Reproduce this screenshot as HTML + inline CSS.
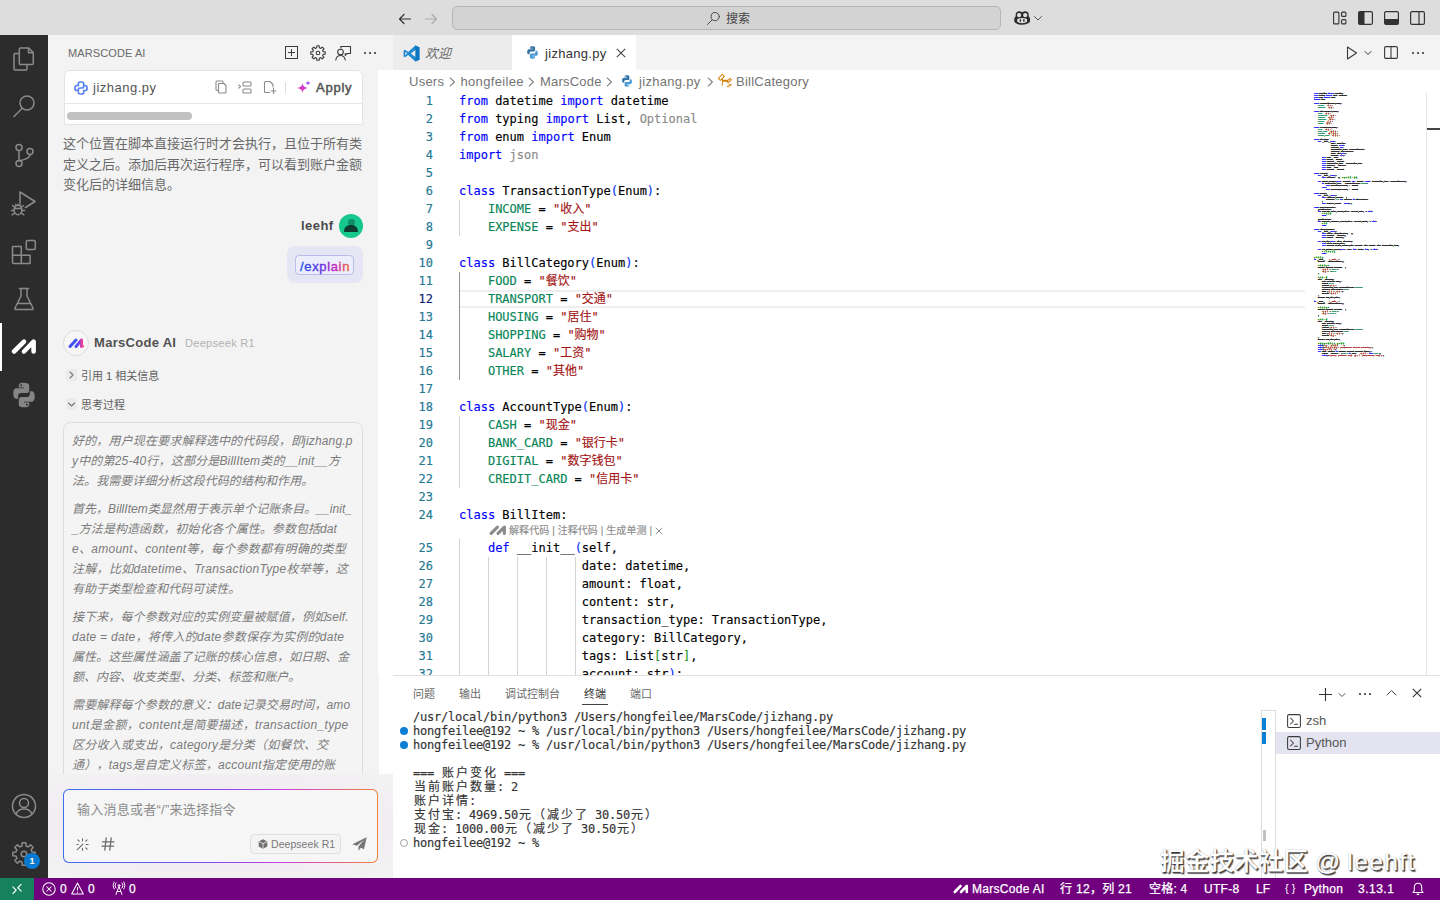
<!DOCTYPE html>
<html lang="zh-CN">
<head>
<meta charset="utf-8">
<title>jizhang.py — MarsCode</title>
<style>
*{box-sizing:border-box;margin:0;padding:0}
html,body{width:1440px;height:900px;overflow:hidden;background:#fff}
body{position:relative;font-family:"Liberation Sans","Noto Sans CJK SC",sans-serif;font-size:13px;color:#333;-webkit-font-smoothing:antialiased}
.abs{position:absolute}
svg{display:block;overflow:visible}
/* title bar */
#title{position:absolute;left:0;top:0;width:1440px;height:35px;background:#dddddd}
#search{position:absolute;left:452px;top:6px;width:549px;height:24px;border:1px solid #b6b6b6;border-radius:5px;background:#d3d3d3}
#search span{position:absolute;left:273px;top:4px;font-size:12px;color:#444;line-height:16px}
/* activity bar */
#act{position:absolute;left:0;top:35px;width:48px;height:843px;background:#2c2c2c}
#act svg{position:absolute}
/* sidebar */
#side{position:absolute;left:48px;top:35px;width:345px;height:843px;background:#f3f3f3;overflow:hidden}
#sidehead{position:absolute;left:20px;top:12px;font-size:11px;color:#6a6a6a;line-height:13px;letter-spacing:.1px}
#tt{text-spacing-trim:space-all}#tt p{height:20px}#tt p.gap{margin-top:8px}
/* editor */
#tabs{position:absolute;left:393px;top:35px;width:1047px;height:35px;background:#f3f3f3}
.tab{position:absolute;top:0;height:35px;font-size:13px;line-height:35px}
#crumbs{position:absolute;left:378px;top:70px;width:1062px;height:22px;background:#fff;font-size:13px;color:#747474;line-height:22px}
#crumbs span{position:absolute;top:1px;white-space:nowrap}
#editor{position:absolute;left:378px;top:92px;width:1062px;height:583px;background:#fff;overflow:hidden}
.ln{position:absolute;left:0;width:55px;text-align:right;font:12px/18px "DejaVu Sans Mono","Liberation Mono",monospace;color:#237893;height:18px}
.cl{position:absolute;left:81px;font:12px/18px "DejaVu Sans Mono","Noto Sans CJK SC","Liberation Mono",monospace;color:#000;height:18px;white-space:pre}
.cl,.ln,.tl{-webkit-text-stroke:.15px currentColor}
.k{color:#0000ff}.s{color:#a31515}.c{color:#098658}.b1{color:#0431fa}.b2{color:#319331}.u{color:#8a8a8a}
.g{position:absolute;width:1px;background:#d3d3d3}
.ga{background:#939393}
.ln.cur{color:#0b216f}
#minimap{left:1314px;top:92px;margin:0;font:bold 12px/10px "DejaVu Sans Mono","Noto Sans CJK SC",monospace;color:#000;transform:scale(.13843,.2);opacity:.85;text-shadow:.6px 0 currentColor,-.6px 0 currentColor,0 .7px currentColor,0 -.7px currentColor;transform-origin:0 0}
#minimap div{height:10px;white-space:pre}
#minimap i{font-style:normal;font-size:7px;letter-spacing:7.448px}
#minimap .c2{color:#008000}
/* panel */
#panel{position:absolute;left:393px;top:675px;width:1047px;height:203px;background:#fff;border-top:1px solid #e0e0e0;overflow:hidden}
.pt{position:absolute;top:11px;font-size:11px;line-height:14px;color:#6a6a6a;white-space:nowrap}
.tl{position:absolute;left:20px;letter-spacing:-.224px;font:12px/14px "DejaVu Sans Mono","Noto Sans CJK SC","Liberation Mono",monospace;color:#333;height:14px;white-space:pre}
.tl i{font-style:normal;display:inline-block;width:14px;text-align:center;letter-spacing:0}
/* status */
#status{position:absolute;left:0;top:878px;width:1440px;height:22px;background:#70007e;color:#fff;font-size:12px;line-height:22px}
#status span{position:absolute;top:0;white-space:nowrap;-webkit-text-stroke:.25px #fff}
</style>
</head>
<body>
<div id="title">
  <svg class="abs" style="left:397px;top:10.500px" width="16" height="16" viewBox="0 0 16 16" fill="none" stroke="#333" stroke-width="1.2" stroke-linecap="round" stroke-linejoin="round"><path d="M13.5 8H2.5M7 3.5L2.5 8L7 12.5"/></svg>
  <svg class="abs" style="left:423px;top:10.500px" width="16" height="16" viewBox="0 0 16 16" fill="none" stroke="#a9a9a9" stroke-width="1.2" stroke-linecap="round" stroke-linejoin="round"><path d="M2.5 8H13.5M9 3.5L13.5 8L9 12.5"/></svg>
  <div id="search">
    <svg class="abs" style="left:253.400px;top:4px" width="15" height="15" viewBox="0 0 15 15" fill="none" stroke="#444" stroke-width=".95" stroke-linecap="round"><circle cx="9.200" cy="5.600" r="4.100"/><path d="M6.2 8.8L1.5 13.5"/></svg>
    <span>搜索</span>
  </div>
  <svg class="abs" style="left:1013.700px;top:10.500px" width="16.300" height="14.500" viewBox="0 0 17 15" preserveAspectRatio="none"><g fill="#2b2b2b"><circle cx="5.400" cy="4.100" r="3.800"/><circle cx="11.600" cy="4.100" r="3.800"/><rect x="5.400" y="1.400" width="6.200" height="6"/><path d="M2 5.500C.8 6.300.3 7.300.3 8.600v1.800c0 .7.300 1.200.8 1.600C3.200 13.500 5.700 14.300 8.500 14.300s5.300-.8 7.400-2.300c.5-.4.800-.9.800-1.600V8.600c0-1.300-.5-2.300-1.700-3.100z"/></g><g fill="#dddddd"><circle cx="5.300" cy="4.200" r="2.250"/><circle cx="11.700" cy="4.200" r="2.250"/><path d="M3.400 8.300c1.500-.7 3.200-1 5.100-1s3.600.3 5.100 1v2.900c-1.500 1-3.200 1.500-5.100 1.500s-3.600-.5-5.100-1.500z"/></g><g fill="#2b2b2b"><rect x="6" y="8.300" width="1.400" height="2.900" rx=".7"/><rect x="9.600" y="8.300" width="1.400" height="2.900" rx=".7"/></g></svg>
  <svg class="abs" style="left:1033px;top:14px" width="10" height="8" viewBox="0 0 10 8" fill="none" stroke="#555" stroke-width="1" stroke-linecap="round" stroke-linejoin="round"><path d="M1.500 2.500L5 6L8.500 2.500"/></svg>
  <!-- layout controls -->
  <svg class="abs" style="left:1333px;top:11px" width="14" height="14" viewBox="0 0 14 14" fill="none" stroke="#333" stroke-width="1.100"><rect x=".6" y="1.100" width="5.300" height="11.800" rx="1"/><rect x="8.600" y="1.100" width="4.300" height="4.300" rx="1"/><rect x="8.600" y="8.600" width="4.300" height="4.300" rx="1"/></svg>
  <svg class="abs" style="left:1358px;top:11px" width="15" height="14" viewBox="0 0 15 14"><rect x=".6" y=".6" width="13.800" height="12.800" rx="1.500" fill="none" stroke="#333" stroke-width="1.200"/><path d="M.6 2.100A1.500 1.500 0 0 1 2.100.6H6.500V13.400H2.100A1.500 1.500 0 0 1 .6 11.900z" fill="#333"/></svg>
  <svg class="abs" style="left:1384px;top:11px" width="15" height="14" viewBox="0 0 15 14"><rect x=".6" y=".6" width="13.800" height="12.800" rx="1.500" fill="none" stroke="#333" stroke-width="1.200"/><path d="M.6 8H14.400V11.900A1.500 1.500 0 0 1 12.900 13.400H2.100A1.500 1.500 0 0 1 .6 11.900z" fill="#333"/></svg>
  <svg class="abs" style="left:1410px;top:11px" width="15" height="14" viewBox="0 0 15 14" fill="none" stroke="#333" stroke-width="1.200"><rect x=".6" y=".6" width="13.800" height="12.800" rx="1.500"/><path d="M9 .6V13.400"/></svg>
</div>

<div id="act">
  <!-- explorer -->
  <svg style="left:12px;top:11px" width="24" height="26" viewBox="0 0 24 26" fill="none" stroke="#8a8a8a" stroke-width="1.500" stroke-linejoin="round"><path d="M8.500 2h8.200l4.600 4.600V17.300a1.200 1.200 0 0 1-1.200 1.200H8.500a1.200 1.200 0 0 1-1.200-1.200V3.200A1.200 1.200 0 0 1 8.500 2z"/><path d="M16.500 2v4.800h4.800"/><path d="M7.300 7.500H3.200A1.200 1.200 0 0 0 2 8.700V22.800A1.200 1.200 0 0 0 3.200 24H13.800A1.200 1.200 0 0 0 15 22.800V18.500"/></svg>
  <!-- search -->
  <svg style="left:12px;top:59px" width="24" height="24" viewBox="0 0 24 24" fill="none" stroke="#8a8a8a" stroke-width="1.500" stroke-linecap="round"><circle cx="15" cy="9" r="7"/><path d="M10 14.500L2 22.500"/></svg>
  <!-- scm -->
  <svg style="left:12px;top:107px" width="24" height="26" viewBox="0 0 24 26" fill="none" stroke="#8a8a8a" stroke-width="1.500"><circle cx="7" cy="5.500" r="3"/><circle cx="7" cy="21.500" r="3"/><circle cx="18" cy="9.500" r="3"/><path d="M7 8.500V18.500M18 12.500c0 4-4 4.500-7.500 5.500C8 18.500 7 19 7 19.500"/></svg>
  <!-- debug -->
  <svg style="left:10px;top:154px" width="28" height="28" viewBox="0 0 28 28" fill="none" stroke="#8a8a8a" stroke-width="1.500" stroke-linejoin="round" stroke-linecap="round"><path d="M10 14V3l15 9.500-9.500 6"/><ellipse cx="8" cy="21" rx="3.800" ry="4.800"/><path d="M4.200 19.500H11.800M8 16.200V15.200M5.500 15.500l1 1M10.500 15.500l-1 1M4.200 21.500H1.500M4.500 24l-2.300 1.800M11.800 21.500h2.700M11.500 24l2.300 1.800M4.800 18.200L2.500 16.500M11.200 18.200l2.300-1.700"/></svg>
  <!-- extensions -->
  <svg style="left:11px;top:204px" width="26" height="26" viewBox="0 0 26 26" fill="none" stroke="#8a8a8a" stroke-width="1.500" stroke-linejoin="round"><path d="M1.500 7.500h8.800v8.800h8.800v8.200H2.700a1.200 1.200 0 0 1-1.200-1.200z"/><path d="M1.500 16.300h8.800v8.200"/><rect x="15.300" y="1.500" width="9" height="9" rx="1.200"/></svg>
  <!-- flask -->
  <svg style="left:12px;top:252px" width="24" height="24" viewBox="0 0 24 24" fill="none" stroke="#8a8a8a" stroke-width="1.500" stroke-linejoin="round" stroke-linecap="round"><path d="M7.500 1.500h9M9 1.500V9L3 21a1 1 0 0 0 .9 1.500h16.200A1 1 0 0 0 21 21L15 9V1.500M6 16.500h12"/></svg>
  <!-- active indicator -->
  <div class="abs" style="left:0;top:288px;width:2px;height:48px;background:#fff"></div>
  <!-- marscode -->
  <svg style="left:11px;top:303px" width="26" height="18" viewBox="0 0 26 18" fill="none" stroke="#fff" stroke-width="4.600" stroke-linecap="round" stroke-linejoin="round"><path d="M3 13.500L13 3.700"/><path d="M13 13.500L22.600 3.700V13.500"/></svg>
  <!-- python -->
  <svg style="left:11px;top:347px" width="26" height="26" viewBox="1 0 22 24"><path d="M11.900.6c-5 0-4.700 2.200-4.700 2.200v2.300h4.800v.7H5.300S2.100 5.400 2.100 10.500s2.800 4.900 2.800 4.900h1.700V13s-.1-2.800 2.800-2.800h4.700s2.700 0 2.700-2.600V3.300S17.200.6 11.900.6zM9.300 2.100a.9.900 0 1 1 0 1.800.9.900 0 0 1 0-1.800z" fill="#858585"/><path d="M12.100 23.400c5 0 4.700-2.200 4.700-2.200v-2.300H12v-.7h6.700s3.200.4 3.200-4.700-2.800-4.900-2.800-4.900h-1.700V11s.1 2.800-2.800 2.800H9.900s-2.700 0-2.700 2.600v4.300s-.4 2.700 4.900 2.700zm2.600-1.500a.9.900 0 1 1 0-1.800.9.900 0 0 1 0 1.800z" fill="#858585"/></svg>
  <!-- account -->
  <svg style="left:11px;top:758px" width="26" height="26" viewBox="0 0 26 26" fill="none" stroke="#8a8a8a" stroke-width="1.500"><circle cx="13" cy="13" r="11.500"/><circle cx="13" cy="10" r="4.500"/><path d="M5 21.200c1.200-3.500 4.200-5.200 8-5.200s6.800 1.700 8 5.200"/></svg>
  <!-- gear -->
  <svg style="left:12px;top:807px" width="24" height="24" viewBox="0 0 24 24" fill="none" stroke="#8a8a8a" stroke-width="1.500" stroke-linejoin="round"><path d="M10.00 3.94L10.14 0.85L13.86 0.85L14.00 3.94L16.28 4.89L18.57 2.81L21.19 5.43L19.11 7.72L20.06 10.00L23.15 10.14L23.15 13.86L20.06 14.00L19.11 16.28L21.19 18.57L18.57 21.19L16.28 19.11L14.00 20.06L13.86 23.15L10.14 23.15L10.00 20.06L7.72 19.11L5.43 21.19L2.81 18.57L4.89 16.28L3.94 14.00L0.85 13.86L0.85 10.14L3.94 10.00L4.89 7.72L2.81 5.43L5.43 2.81L7.72 4.89z"/><circle cx="12" cy="12" r="2.800"/></svg>
  <div class="abs" style="left:24px;top:818px;width:16px;height:16px;border-radius:8px;background:#0a7ad0;color:#fff;font-size:9px;font-weight:bold;line-height:16px;text-align:center">1</div>
</div>
<div id="side">
  <div id="sidehead">MARSCODE AI</div>
  <!-- header actions -->
  <svg class="abs" style="left:285px;top:46px;margin-left:-48px;margin-top:-35px" width="13" height="13" viewBox="0 0 13 13" fill="none" stroke="#3b3b3b" stroke-width="1"><rect x=".5" y=".5" width="12" height="12"/><path d="M6.500 3V10M3 6.500H10"/></svg>
  <svg class="abs" style="left:262px;top:10px" width="16" height="16" viewBox="0 0 16 16" fill="none" stroke="#3b3b3b" stroke-width="1.100" stroke-linejoin="round"><path d="M6.70 2.76L6.80 0.80L9.20 0.80L9.30 2.76L10.79 3.37L12.24 2.06L13.94 3.76L12.63 5.21L13.24 6.70L15.20 6.80L15.20 9.20L13.24 9.30L12.63 10.79L13.94 12.24L12.24 13.94L10.79 12.63L9.30 13.24L9.20 15.20L6.80 15.20L6.70 13.24L5.21 12.63L3.76 13.94L2.06 12.24L3.37 10.79L2.76 9.30L0.80 9.20L0.80 6.80L2.76 6.70L3.37 5.21L2.06 3.76L3.76 2.06L5.21 3.37z"/><circle cx="8" cy="8" r="1.800"/></svg>
  <svg class="abs" style="left:287px;top:10px" width="17" height="16" viewBox="0 0 17 16" fill="none" stroke="#3b3b3b" stroke-width="1.100" stroke-linejoin="round" stroke-linecap="round"><circle cx="5.500" cy="7" r="2.800"/><path d="M.8 15c.5-3 2.300-4.500 4.700-4.500s4.200 1.500 4.700 4.500"/><path d="M6 1.500h9.500v7H12l-1.800 1.800V8.500"/><path d="M6 1.500V3"/></svg>
  <svg class="abs" style="left:315px;top:16px" width="14" height="4" viewBox="0 0 14 4" fill="#3b3b3b"><circle cx="2" cy="2" r="1.100"/><circle cx="7" cy="2" r="1.100"/><circle cx="12" cy="2" r="1.100"/></svg>

  <!-- code card -->
  <div class="abs" style="left:15.5px;top:35px;width:299px;height:55px;background:#fff;border:1px solid #e4e4e4;border-radius:6px 6px 0 0"></div>
  <div class="abs" style="left:16px;top:68px;width:298px;height:1px;background:#e6e6e6"></div>
  <svg class="abs" style="left:26px;top:46px" width="14" height="14" viewBox="0 0 14 14" fill="none" stroke="#5882f2" stroke-width="1.700" stroke-linecap="round"><path d="M4.300 4.500V2.800a1.800 1.800 0 0 1 1.800-1.800h1.800a1.800 1.800 0 0 1 1.800 1.800v2.400a1.800 1.800 0 0 1-1.800 1.800H6.100a1.800 1.800 0 0 0-1.800 1.800v.7"/><path d="M9.700 9.500v1.700a1.800 1.800 0 0 1-1.800 1.800H6.100a1.800 1.800 0 0 1-1.800-1.800"/><path d="M4.300 4.500H2.800A1.800 1.800 0 0 0 1 6.300v1.400a1.800 1.800 0 0 0 1.800 1.800h1.500M9.700 4.500h1.500A1.800 1.800 0 0 1 13 6.300v1.400a1.800 1.800 0 0 1-1.800 1.800H9.700"/></svg>
  <div class="abs" style="left:45px;top:45px;font-size:13px;line-height:16px;color:#555;letter-spacing:.5px">jizhang.py</div>
  <svg class="abs" style="left:167px;top:45px" width="12" height="14" viewBox="0 0 12 14" fill="none" stroke="#8a8a8a" stroke-width="1.100" stroke-linejoin="round"><path d="M3.500 3.500h5.500l2 2V12a1 1 0 0 1-1 1H4.500a1 1 0 0 1-1-1z"/><path d="M3.500 10.500H2a1 1 0 0 1-1-1V2a1 1 0 0 1 1-1h5a1 1 0 0 1 1 1v1.500"/></svg>
  <svg class="abs" style="left:190px;top:46px" width="14" height="13" viewBox="0 0 14 13" fill="none" stroke="#8a8a8a" stroke-width="1.100" stroke-linejoin="round" stroke-linecap="round"><rect x="5" y="1" width="8" height="4" rx="1"/><rect x="5" y="8" width="8" height="4" rx="1"/><path d="M.8 3.800L2.500 5.500.8 7.200"/></svg>
  <svg class="abs" style="left:215px;top:45px" width="14" height="14" viewBox="0 0 14 14" fill="none" stroke="#8a8a8a" stroke-width="1.100" stroke-linejoin="round" stroke-linecap="round"><path d="M6.500 12.500H2.500a1 1 0 0 1-1-1V2.500a1 1 0 0 1 1-1H7l3 3v2.500"/><path d="M10.500 8.500v5M8 11h5"/></svg>
  <div class="abs" style="left:237px;top:47px;width:1px;height:11px;background:#dcdcdc"></div>
  <svg class="abs" style="left:249px;top:45px" width="14" height="14" viewBox="0 0 14 14"><defs><linearGradient id="sp" x1="0" y1="1" x2="1" y2="0"><stop offset="0" stop-color="#f0407a"/><stop offset=".55" stop-color="#d63ad0"/><stop offset="1" stop-color="#8a4cf5"/></linearGradient></defs><path d="M5.500 3C6 6 7 7 10.500 8 7 9 6 10 5.500 13 5 10 4 9 .5 8 4 7 5 6 5.500 3z" fill="url(#sp)"/><path d="M11 .5c.3 1.500.8 2 2.500 2.500-1.700.5-2.200 1-2.500 2.500-.3-1.500-.8-2-2.500-2.500C10.200 2.500 10.700 2 11 .5z" fill="#9a4cf0"/></svg>
  <div class="abs" style="left:268px;top:45px;font-size:13px;line-height:16px;color:#555;-webkit-text-stroke:.5px #555;letter-spacing:.75px">Apply</div>
  <div class="abs" style="left:19px;top:77px;width:125px;height:8px;border-radius:4px;background:#c1c1c1"></div>

  <!-- answer text -->
  <div class="abs" style="left:15px;top:99px;width:310px;font-size:13px;line-height:20.500px;color:#686868;white-space:nowrap">这个位置在脚本直接运行时才会执行，且位于所有类<br>定义之后。添加后再次运行程序，可以看到账户金额<br>变化后的详细信息。</div>

  <!-- user -->
  <div class="abs" style="left:253px;top:183px;font-size:13px;line-height:16px;color:#4a4a4a;font-weight:bold;letter-spacing:.45px">leehf</div>
  <div class="abs" style="left:291px;top:179px;width:24px;height:24px;border-radius:12px;background:#16c78e;overflow:hidden">
    <div class="abs" style="left:8.500px;top:5px;width:7px;height:7px;border-radius:4px;background:#0e8f68"></div>
    <div class="abs" style="left:5px;top:11px;width:14px;height:7px;border-radius:7px 7px 1px 1px;background:#0d3b30"></div>
  </div>
  <div class="abs" style="left:239px;top:211px;width:76px;height:37px;border-radius:8px;background:#e5e5f3"></div>
  <div class="abs" style="left:247px;top:220px;width:59px;height:20px;border-radius:4px;background:#eceefb;border:1px solid #b9bdea"></div>
  <svg class="abs" style="left:251px;top:221px" width="52" height="20" viewBox="0 0 52 20"><defs><linearGradient id="eg" x1="0" y1="0" x2="1" y2="0"><stop offset="0" stop-color="#2457e6"/><stop offset=".4" stop-color="#5a35e8"/><stop offset=".7" stop-color="#c022c0"/><stop offset="1" stop-color="#f26a2a"/></linearGradient></defs><text x="1" y="14.500" font-family="Liberation Sans, sans-serif" font-size="13" letter-spacing=".65" fill="url(#eg)" stroke="url(#eg)" stroke-width=".35">/explain</text></svg>

  <!-- AI header -->
  <div class="abs" style="left:15px;top:295px;width:26px;height:26px;border-radius:13px;background:#f7f7f7;border:1px solid #dcdcdc"></div>
  <svg class="abs" style="left:20px;top:302px" width="17" height="12" viewBox="0 0 17 12" fill="none" stroke-width="3" stroke-linecap="round" stroke-linejoin="round"><defs><linearGradient id="mg" x1="0" y1="0" x2="1" y2="0"><stop offset="0" stop-color="#3a55f5"/><stop offset=".6" stop-color="#7a3af0"/><stop offset="1" stop-color="#e8409a"/></linearGradient></defs><path d="M2 9.500L8 3" stroke="#3f52f3"/><path d="M8 9.500L13.500 3V9.500" stroke="url(#mg)"/><circle cx="15.300" cy="9.300" r="1" fill="#f05a8a"/></svg>
  <div class="abs" style="left:46px;top:300px;font-size:13px;line-height:16px;color:#525252;font-weight:bold;letter-spacing:.3px">MarsCode AI</div>
  <div class="abs" style="left:137px;top:301px;font-size:11px;line-height:14px;color:#b2b2b2;letter-spacing:.3px">Deepseek R1</div>

  <div class="abs" style="left:18px;top:334px;width:11px;height:12px;border-radius:2px;background:#ebebeb"></div>
  <svg class="abs" style="left:20px;top:336px" width="7" height="8" viewBox="0 0 7 8" fill="none" stroke="#777" stroke-width="1.100" stroke-linecap="round" stroke-linejoin="round"><path d="M2 1L5 4L2 7"/></svg>
  <div class="abs" style="left:33px;top:333.500px;font-size:11px;line-height:14px;color:#606060">引用 1 相关信息</div>
  <div class="abs" style="left:18px;top:363px;width:11px;height:12px;border-radius:2px;background:#ebebeb"></div>
  <svg class="abs" style="left:19px;top:366px" width="9" height="7" viewBox="0 0 9 7" fill="none" stroke="#777" stroke-width="1.100" stroke-linecap="round" stroke-linejoin="round"><path d="M1.500 2L4.500 5L7.500 2"/></svg>
  <div class="abs" style="left:33px;top:362.700px;font-size:11px;line-height:14px;color:#606060">思考过程</div>

  <!-- thinking box -->
  <div class="abs" id="think" style="left:15px;top:387px;width:300px;height:352px;overflow:hidden">
    <div class="abs" style="left:0;top:0;width:300px;height:420px;border:1px solid #dddddd;border-radius:8px;background:#f4f4f4"></div>
    <div class="abs" id="tt" style="left:9px;top:9px;font-size:12px;line-height:20px;font-style:italic;color:#7b7b7b;white-space:nowrap">
<p><span style="letter-spacing:0.163px">好的，用户现在要求解释选中的代码段，即jizhang.p</span></p>
<p><span style="letter-spacing:0.183px">y中的第25-40行，这部分是BillItem类的__init__方</span></p>
<p><span style="letter-spacing:0.064px">法。我需要详细分析这段代码的结构和作用。</span></p>
<p class="gap"><span style="letter-spacing:0.041px">首先，BillItem类显然用于表示单个记账条目。__init_</span></p>
<p><span style="letter-spacing:0.068px">_方法是构造函数，初始化各个属性。参数包括dat</span></p>
<p><span style="letter-spacing:0.273px">e、amount、content等，每个参数都有明确的类型</span></p>
<p><span style="letter-spacing:0.305px">注解，比如datetime、TransactionType枚举等，这</span></p>
<p><span style="letter-spacing:0.020px">有助于类型检查和代码可读性。</span></p>
<p class="gap"><span style="letter-spacing:0.099px">接下来，每个参数对应的实例变量被赋值，例如self.</span></p>
<p><span style="letter-spacing:0.287px">date = date，将传入的date参数保存为实例的date</span></p>
<p><span style="letter-spacing:0.056px">属性。这些属性涵盖了记账的核心信息，如日期、金</span></p>
<p><span style="letter-spacing:0.014px">额、内容、收支类型、分类、标签和账户。</span></p>
<p class="gap"><span style="letter-spacing:0.138px">需要解释每个参数的意义：date记录交易时间，amo</span></p>
<p><span style="letter-spacing:0.347px">unt是金额，content是简要描述，transaction_type</span></p>
<p><span style="letter-spacing:0.263px">区分收入或支出，category是分类（如餐饮、交</span></p>
<p><span style="letter-spacing:0.244px">通），tags是自定义标签，account指定使用的账</span></p>
    </div>
  </div>
  <!-- scrollbar strip of webview -->
  <div class="abs" style="left:331px;top:35px;width:14px;height:704px;background:#fff"></div>
  <div class="abs" style="left:335px;top:467px;width:6px;height:33px;border-radius:3px;background:#c4c4c4"></div>

  <!-- input -->
  <div class="abs" style="left:0;top:739px;width:345px;height:104px;background:radial-gradient(ellipse 75% 70% at 50% 48%,#efe9ef 0%,#f1edf1 55%,#f3f3f3 100%)"></div>
  <div class="abs" style="left:15px;top:754px;width:315px;height:74px;border-radius:6px;background:linear-gradient(90deg,#3a6df0 0%,#7a4cf0 45%,#c840e0 70%,#f5803a 100%);padding:1px"><div style="width:100%;height:100%;border-radius:5px;background:#f6f6f6"></div></div>
  <div class="abs" style="left:29px;top:767px;font-size:13px;line-height:16px;color:#8c8c8c;letter-spacing:.25px">输入消息或者“/”来选择指令</div>
  <svg class="abs" style="left:28px;top:803px" width="13" height="13" viewBox="0 0 15 15" fill="none" stroke="#6a6a6a" stroke-width="1.300" stroke-linecap="round"><path d="M1.500 13.500L8 7"/><path d="M7.500 1v2.200M12.800 2.200l-1.500 1.500M14 7.500h-2.200M12.800 12.800l-1.500-1.500M2.200 2.200l1.500 1.500M1 7.500h1.500M7.500 12v2"/></svg>
  <svg class="abs" style="left:53px;top:802px" width="14" height="14" viewBox="0 0 14 14" fill="none" stroke="#6a6a6a" stroke-width="1.300" stroke-linecap="round"><path d="M5.200 1L3.800 13M10.200 1L8.800 13M1.500 4.800h11.500M1 9.200h11.500"/></svg>
  <div class="abs" style="left:202px;top:799px;width:91px;height:20px;border-radius:4px;border:1px solid #dedede;background:#f4f4f4"></div>
  <svg class="abs" style="left:210px;top:804px" width="10" height="10" viewBox="0 0 10 10"><path d="M5 .3L9.300 2.500V7.500L5 9.700.7 7.500V2.500z" fill="#6f6f6f"/><path d="M.9 2.600L5 4.700l4.100-2.100M5 4.700V9.500" fill="none" stroke="#f4f4f4" stroke-width=".8"/></svg>
  <div class="abs" style="left:223px;top:802px;font-size:10.500px;line-height:14px;color:#7a7a7a;letter-spacing:.05px">Deepseek R1</div>
  <svg class="abs" style="left:304px;top:802px" width="15" height="14" viewBox="0 0 15 14"><path d="M14.700.3L.3 7.200l4.500 1.500 7-5.700-5.300 6.500v4.200l2.300-3 3.200 1.600z" fill="#777"/></svg>
</div>
<div id="tabs">
  <div class="tab" style="left:0;width:119px;background:#ececec"></div>
  <svg class="abs" style="left:10px;top:9.500px" width="17" height="17" viewBox="0 0 17 17"><path d="M12.300.4L5.200 7.100 2.100 4.700.6 5.500v6l1.500.8 3.100-2.400 7.100 6.700 4.100-1.800V2.200z" fill="#1f8ad2"/><path d="M12.300.4l4.100 1.800v12.600l-4.100 1.800z" fill="#0e74c4"/><path d="M12.300 5L7.800 8.500l4.500 3.500z" fill="#ececec"/><path d="M2.300 6.700L4.200 8.500 2.300 10.300z" fill="#ececec"/></svg>
  <div class="tab" style="left:32px;top:1px;font-style:italic;color:#6a6a6a">欢迎</div>
  <div class="tab" style="left:119px;width:124px;background:#fff"></div>
  <svg class="abs" style="left:133px;top:11px" width="13" height="13" viewBox="0 0 24 24"><path d="M11.900.6c-5 0-4.700 2.200-4.700 2.200v2.300h4.800v.7H5.300S2.100 5.400 2.100 10.500s2.800 4.900 2.800 4.900h1.700V13s-.1-2.800 2.800-2.800h4.700s2.700 0 2.700-2.600V3.300S17.200.6 11.900.6zM9.300 2.100a.9.900 0 1 1 0 1.800.9.900 0 0 1 0-1.800z" fill="#3572a5"/><path d="M12.100 23.400c5 0 4.700-2.200 4.700-2.200v-2.300H12v-.7h6.700s3.200.4 3.200-4.700-2.800-4.900-2.800-4.900h-1.700V11s.1 2.800-2.800 2.800H9.900s-2.700 0-2.700 2.600v4.300s-.4 2.700 4.900 2.700zm2.600-1.500a.9.900 0 1 1 0-1.800.9.900 0 0 1 0 1.800z" fill="#4b9bd6"/></svg>
  <div class="tab" style="left:152px;color:#333;letter-spacing:.3px;top:.5px">jizhang.py</div>
  <svg class="abs" style="left:223px;top:13px" width="10" height="10" viewBox="0 0 10 10" fill="none" stroke="#444" stroke-width="1.100"><path d="M.8.8L9.200 9.200M9.200.8L.8 9.200"/></svg>
  <!-- editor actions -->
  <svg class="abs" style="left:953px;top:11px" width="12" height="14" viewBox="0 0 12 14" fill="none" stroke="#3b3b3b" stroke-width="1.100" stroke-linejoin="round"><path d="M1.500 1L10.500 7 1.500 13z"/></svg>
  <svg class="abs" style="left:971px;top:15px" width="8" height="6" viewBox="0 0 8 6" fill="none" stroke="#3b3b3b" stroke-width="1" stroke-linecap="round" stroke-linejoin="round"><path d="M1 1.500L4 4.500L7 1.500"/></svg>
  <svg class="abs" style="left:991px;top:11px" width="14" height="13" viewBox="0 0 14 13" fill="none" stroke="#3b3b3b" stroke-width="1.100"><rect x=".6" y=".6" width="12.800" height="11.800" rx="1.200"/><path d="M7 .6V12.400"/></svg>
  <svg class="abs" style="left:1018px;top:16px" width="14" height="4" viewBox="0 0 14 4" fill="#3b3b3b"><circle cx="2" cy="2" r="1.100"/><circle cx="7" cy="2" r="1.100"/><circle cx="12" cy="2" r="1.100"/></svg>
</div>
<div id="crumbs">
  <span style="left:31px;letter-spacing:.25px">Users</span>
  <svg class="abs" style="left:71px;top:7px" width="6.500" height="10" viewBox="0 0 6 9" fill="none" stroke="#7a7a7a" stroke-width=".95" stroke-linecap="round" stroke-linejoin="round"><path d="M1 .8L5 4.500L1 8.200"/></svg>
  <span style="left:82.500px;letter-spacing:.33px">hongfeilee</span>
  <svg class="abs" style="left:150px;top:7px" width="6.500" height="10" viewBox="0 0 6 9" fill="none" stroke="#7a7a7a" stroke-width=".95" stroke-linecap="round" stroke-linejoin="round"><path d="M1 .8L5 4.500L1 8.200"/></svg>
  <span style="left:162px;letter-spacing:.2px">MarsCode</span>
  <svg class="abs" style="left:228px;top:7px" width="6.500" height="10" viewBox="0 0 6 9" fill="none" stroke="#7a7a7a" stroke-width=".95" stroke-linecap="round" stroke-linejoin="round"><path d="M1 .8L5 4.500L1 8.200"/></svg>
  <svg class="abs" style="left:243px;top:5px" width="12" height="12" viewBox="0 0 24 24"><path d="M11.900.6c-5 0-4.700 2.200-4.700 2.200v2.300h4.800v.7H5.300S2.100 5.400 2.100 10.500s2.800 4.900 2.800 4.900h1.700V13s-.1-2.800 2.800-2.800h4.700s2.700 0 2.700-2.600V3.300S17.200.6 11.900.6zM9.300 2.100a.9.900 0 1 1 0 1.800.9.900 0 0 1 0-1.800z" fill="#3572a5"/><path d="M12.100 23.400c5 0 4.700-2.200 4.700-2.200v-2.300H12v-.7h6.700s3.200.4 3.200-4.700-2.800-4.900-2.800-4.900h-1.700V11s.1 2.800-2.800 2.800H9.900s-2.700 0-2.700 2.600v4.300s-.4 2.700 4.900 2.700zm2.600-1.500a.9.900 0 1 1 0-1.800.9.900 0 0 1 0 1.800z" fill="#4b9bd6"/></svg>
  <span style="left:261px;letter-spacing:.3px">jizhang.py</span>
  <svg class="abs" style="left:329px;top:7px" width="6.500" height="10" viewBox="0 0 6 9" fill="none" stroke="#7a7a7a" stroke-width=".95" stroke-linecap="round" stroke-linejoin="round"><path d="M1 .8L5 4.500L1 8.200"/></svg>
  <svg class="abs" style="left:339px;top:3px" width="16" height="16" viewBox="0 0 16 16"><path fill="#d67e00" d="M11.340 9.710h.710l2.670-2.670v-.710L13.380 5h-.700l-1.820 1.810h-5V5.560l1.860-1.850V3l-2-2H5L1 5v.710l2 2h.710l1.140-1.150v5.790l.500.500H10v.520l1.330 1.340h.710l2.670-2.670v-.710L13.370 11h-.700l-1.860 1.850h-5v-4H10v.480l1.340 1.380zm1.690-3.650l.630.630-2 2-.630-.630 2-2zm0 6l.630.630-2 2-.630-.630 2-2zM3.350 6.650l-1.290-1.300 3.290-3.290 1.300 1.290-3.300 3.300z"/></svg>
  <span style="left:358px;letter-spacing:.25px">BillCategory</span>
</div>
<div id="editor">
  <div class="abs" style="left:81px;top:198px;width:846px;height:18px;border-top:2px solid #eeeeee;border-bottom:2px solid #eeeeee"></div>
  <div class="g" style="left:81px;top:108px;height:36px"></div>
  <div class="g ga" style="left:81px;top:180px;height:108px"></div>
  <div class="g" style="left:81px;top:324px;height:72px"></div>
  <div class="g" style="left:81px;top:447px;height:140px"></div>
  <div class="g" style="left:110px;top:465px;height:125px"></div>
  <div class="g" style="left:139px;top:465px;height:125px"></div>
  <div class="g" style="left:168px;top:465px;height:125px"></div>
  <div class="g" style="left:197px;top:465px;height:125px"></div>
  <div class="ln" style="top:0px">1</div><div class="cl" style="top:0px"><span class="k">from</span> datetime <span class="k">import</span> datetime</div>
  <div class="ln" style="top:18px">2</div><div class="cl" style="top:18px"><span class="k">from</span> typing <span class="k">import</span> List, <span class="u">Optional</span></div>
  <div class="ln" style="top:36px">3</div><div class="cl" style="top:36px"><span class="k">from</span> enum <span class="k">import</span> Enum</div>
  <div class="ln" style="top:54px">4</div><div class="cl" style="top:54px"><span class="k">import</span> <span class="u">json</span></div>
  <div class="ln" style="top:72px">5</div><div class="cl" style="top:72px"></div>
  <div class="ln" style="top:90px">6</div><div class="cl" style="top:90px"><span class="k">class</span> TransactionType<span class="b1">(</span>Enum<span class="b1">)</span>:</div>
  <div class="ln" style="top:108px">7</div><div class="cl" style="top:108px">    <span class="c">INCOME</span> = <span class="s">&quot;收入&quot;</span></div>
  <div class="ln" style="top:126px">8</div><div class="cl" style="top:126px">    <span class="c">EXPENSE</span> = <span class="s">&quot;支出&quot;</span></div>
  <div class="ln" style="top:144px">9</div><div class="cl" style="top:144px"></div>
  <div class="ln" style="top:162px">10</div><div class="cl" style="top:162px"><span class="k">class</span> BillCategory<span class="b1">(</span>Enum<span class="b1">)</span>:</div>
  <div class="ln" style="top:180px">11</div><div class="cl" style="top:180px">    <span class="c">FOOD</span> = <span class="s">&quot;餐饮&quot;</span></div>
  <div class="ln cur" style="top:198px">12</div><div class="cl" style="top:198px">    <span class="c">TRANSPORT</span> = <span class="s">&quot;交通&quot;</span></div>
  <div class="ln" style="top:216px">13</div><div class="cl" style="top:216px">    <span class="c">HOUSING</span> = <span class="s">&quot;居住&quot;</span></div>
  <div class="ln" style="top:234px">14</div><div class="cl" style="top:234px">    <span class="c">SHOPPING</span> = <span class="s">&quot;购物&quot;</span></div>
  <div class="ln" style="top:252px">15</div><div class="cl" style="top:252px">    <span class="c">SALARY</span> = <span class="s">&quot;工资&quot;</span></div>
  <div class="ln" style="top:270px">16</div><div class="cl" style="top:270px">    <span class="c">OTHER</span> = <span class="s">&quot;其他&quot;</span></div>
  <div class="ln" style="top:288px">17</div><div class="cl" style="top:288px"></div>
  <div class="ln" style="top:306px">18</div><div class="cl" style="top:306px"><span class="k">class</span> AccountType<span class="b1">(</span>Enum<span class="b1">)</span>:</div>
  <div class="ln" style="top:324px">19</div><div class="cl" style="top:324px">    <span class="c">CASH</span> = <span class="s">&quot;现金&quot;</span></div>
  <div class="ln" style="top:342px">20</div><div class="cl" style="top:342px">    <span class="c">BANK_CARD</span> = <span class="s">&quot;银行卡&quot;</span></div>
  <div class="ln" style="top:360px">21</div><div class="cl" style="top:360px">    <span class="c">DIGITAL</span> = <span class="s">&quot;数字钱包&quot;</span></div>
  <div class="ln" style="top:378px">22</div><div class="cl" style="top:378px">    <span class="c">CREDIT_CARD</span> = <span class="s">&quot;信用卡&quot;</span></div>
  <div class="ln" style="top:396px">23</div><div class="cl" style="top:396px"></div>
  <div class="ln" style="top:414px">24</div><div class="cl" style="top:414px"><span class="k">class</span> BillItem:</div>
  <div class="ln" style="top:447px">25</div><div class="cl" style="top:447px">    <span class="k">def</span> __init__<span class="b1">(</span>self,</div>
  <div class="ln" style="top:465px">26</div><div class="cl" style="top:465px">                 date: datetime,</div>
  <div class="ln" style="top:483px">27</div><div class="cl" style="top:483px">                 amount: float,</div>
  <div class="ln" style="top:501px">28</div><div class="cl" style="top:501px">                 content: str,</div>
  <div class="ln" style="top:519px">29</div><div class="cl" style="top:519px">                 transaction_type: TransactionType,</div>
  <div class="ln" style="top:537px">30</div><div class="cl" style="top:537px">                 category: BillCategory,</div>
  <div class="ln" style="top:555px">31</div><div class="cl" style="top:555px">                 tags: List<span class="b2">[</span>str<span class="b2">]</span>,</div>
  <div class="ln" style="top:573px">32</div><div class="cl" style="top:573px">                 account: str<span class="b1">)</span>:</div>
  <div class="abs" id="lens" style="left:110px;top:431px;height:15px;font-size:10px;line-height:15px;color:#8e8e8e;white-space:nowrap;letter-spacing:.07px;-webkit-text-stroke:.15px #8e8e8e"><svg class="abs" style="left:.5px;top:2px" width="18" height="10.600" viewBox="0 0 17 10" fill="none" stroke="#8c8c8c" stroke-width="3" stroke-linecap="round" stroke-linejoin="round"><path d="M2 8L8 2"/><path d="M8.500 8L14.500 2V8"/></svg><span style="position:absolute;left:21px">解释代码 | 注释代码 | 生成单测 | </span><svg class="abs" style="left:167px;top:4px" width="8" height="8" viewBox="0 0 8 8" fill="none" stroke="#8e8e8e" stroke-width="1"><path d="M.8.8L7.200 7.200M7.200.8L.8 7.200"/></svg></div>
</div>
<div id="minimap" class="abs">
<div><span class="k">from</span> datetime <span class="k">import</span> datetime</div>
<div><span class="k">from</span> typing <span class="k">import</span> List, Optional</div>
<div><span class="k">from</span> enum <span class="k">import</span> Enum</div>
<div><span class="k">import</span> json</div>
<div></div>
<div><span class="k">class</span> TransactionType(Enum):</div>
<div>    <span class="c">INCOME</span> = <span class="s">&quot;<i>收入</i>&quot;</span></div>
<div>    <span class="c">EXPENSE</span> = <span class="s">&quot;<i>支出</i>&quot;</span></div>
<div></div>
<div><span class="k">class</span> BillCategory(Enum):</div>
<div>    <span class="c">FOOD</span> = <span class="s">&quot;<i>餐饮</i>&quot;</span></div>
<div>    <span class="c">TRANSPORT</span> = <span class="s">&quot;<i>交通</i>&quot;</span></div>
<div>    <span class="c">HOUSING</span> = <span class="s">&quot;<i>居住</i>&quot;</span></div>
<div>    <span class="c">SHOPPING</span> = <span class="s">&quot;<i>购物</i>&quot;</span></div>
<div>    <span class="c">SALARY</span> = <span class="s">&quot;<i>工资</i>&quot;</span></div>
<div>    <span class="c">OTHER</span> = <span class="s">&quot;<i>其他</i>&quot;</span></div>
<div></div>
<div><span class="k">class</span> AccountType(Enum):</div>
<div>    <span class="c">CASH</span> = <span class="s">&quot;<i>现金</i>&quot;</span></div>
<div>    <span class="c">BANK_CARD</span> = <span class="s">&quot;<i>银行卡</i>&quot;</span></div>
<div>    <span class="c">DIGITAL</span> = <span class="s">&quot;<i>数字钱包</i>&quot;</span></div>
<div>    <span class="c">CREDIT_CARD</span> = <span class="s">&quot;<i>信用卡</i>&quot;</span></div>
<div></div>
<div><span class="k">class</span> BillItem:</div>
<div>    <span class="k">def</span> __init__(<span class="k">self</span>,</div>
<div>                 date: datetime,</div>
<div>                 amount: <span class="k">float</span>,</div>
<div>                 content: <span class="k">str</span>,</div>
<div>                 transaction_type: TransactionType,</div>
<div>                 category: BillCategory,</div>
<div>                 tags: List[<span class="k">str</span>],</div>
<div>                 account: <span class="k">str</span>):</div>
<div>        <span class="k">self</span><span class="c">.</span>date = date</div>
<div>        <span class="k">self</span><span class="c">.</span>amount = amount</div>
<div>        <span class="k">self</span><span class="c">.</span>content = content</div>
<div>        <span class="k">self</span><span class="c">.</span>transaction_type = transaction_type</div>
<div>        <span class="k">self</span><span class="c">.</span>category = category</div>
<div>        <span class="k">self</span><span class="c">.</span>tags = tags</div>
<div>        <span class="k">self</span><span class="c">.</span>account = account</div>
<div></div>
<div><span class="k">class</span> Account:</div>
<div>    <span class="k">def</span> __init__(<span class="k">self</span>):</div>
<div>        <span class="k">self</span><span class="c">.</span>accounts = {}  <span class="c2"># <i>账户名称</i>: <i>余额</i></span></div>
<div></div>
<div>    <span class="k">def</span> update_balance(<span class="k">self</span>, account: <span class="k">str</span>, amount: <span class="k">float</span>, transaction_type: TransactionType):</div>
<div>        <span class="k">if</span> transaction_type == TransactionType<span class="c">.</span><span class="c">INCOME</span>:</div>
<div>            <span class="k">self</span><span class="c">.</span>accounts[account] += amount</div>
<div>        <span class="k">else</span>:</div>
<div>            <span class="k">self</span><span class="c">.</span>accounts[account] -= amount</div>
<div></div>
<div><span class="k">class</span> Budget:</div>
<div>    <span class="k">def</span> __init__(<span class="k">self</span>):</div>
<div>        <span class="k">self</span><span class="c">.</span>category_budgets = {</div>
<div>            category: <span class="c">0.0</span> <span class="k">for</span> category <span class="k">in</span> BillCategory</div>
<div>        }</div>
<div>        <span class="k">self</span><span class="c">.</span>monthly_budget = <span class="k">float</span>(<span class="c">0</span>)</div>
<div></div>
<div><span class="k">class</span> ReportGenerator:</div>
<div>    @staticmethod</div>
<div>    <span class="k">def</span> generate_daily_report(bills, current_date) -&gt; <span class="k">dict</span>:</div>
<div>        <span class="c2"># <i>生成日报</i></span></div>
<div>        <span class="k">pass</span></div>
<div></div>
<div>    @staticmethod</div>
<div>    <span class="k">def</span> generate_category_report(bills, current_month) -&gt; <span class="k">dict</span>:</div>
<div>        <span class="c2"># <i>分类</i></span></div>
<div>        <span class="k">pass</span></div>
<div></div>
<div><span class="k">class</span> FinanceManager:</div>
<div>    <span class="k">def</span> __init__(<span class="k">self</span>):</div>
<div>        <span class="k">self</span><span class="c">.</span>bills: List[BillItem] = []</div>
<div>        <span class="k">self</span><span class="c">.</span>account = Account()</div>
<div>        <span class="k">self</span><span class="c">.</span>budget = Budget()</div>
<div></div>
<div>    <span class="k">def</span> add_bill(<span class="k">self</span>, bill: BillItem):</div>
<div>        <span class="k">self</span><span class="c">.</span>bills<span class="c">.</span>append(bill)</div>
<div>        <span class="k">self</span><span class="c">.</span>account<span class="c">.</span>update_balance(bill<span class="c">.</span>account, bill<span class="c">.</span>amount, bill<span class="c">.</span>transaction_type)</div>
<div></div>
<div>    <span class="k">def</span> set_monthly_budget(<span class="k">self</span>, year: <span class="k">int</span>, month: <span class="k">int</span>) -&gt; <span class="k">dict</span>:</div>
<div>        <span class="c2"># <i>月度预算设置</i></span></div>
<div>        <span class="k">pass</span></div>
<div></div>
<div><span class="c2"># <i>示例用法</i></span></div>
<div><span class="k">if</span> __name__ == <span class="s">&quot;__main__&quot;</span>:</div>
<div>    manager = FinanceManager()</div>
<div></div>
<div>    <span class="c2"># <i>初始化账户</i></span></div>
<div>    manager<span class="c">.</span>account<span class="c">.</span>accounts = {</div>
<div>        <span class="s">&quot;<i>支付宝</i>&quot;</span>: <span class="c">5000.0</span>,</div>
<div>        <span class="s">&quot;<i>现金</i>&quot;</span>: <span class="c">1000.0</span></div>
<div>    }</div>
<div></div>
<div>    <span class="c2"># <i>添加一笔</i></span></div>
<div>    bill = BillItem(</div>
<div>        date=datetime<span class="c">.</span>now(),</div>
<div>        amount=<span class="c">30.5</span>,</div>
<div>        content=<span class="s">&quot;<i>午餐</i>&quot;</span>,</div>
<div>        transaction_type=TransactionType<span class="c">.</span><span class="c">EXPENSE</span>,</div>
<div>        category=BillCategory<span class="c">.</span><span class="c">FOOD</span>,</div>
<div>        tags=[<span class="s">&quot;<i>日常</i>&quot;</span>, <span class="s">&quot;<i>餐饮</i>&quot;</span>],</div>
<div>        account=<span class="s">&quot;<i>支付宝</i>&quot;</span></div>
<div>    )</div>
<div>    manager<span class="c">.</span>add_bill(bill)</div>
<div></div>
<div><span class="k">if</span> __name__ == <span class="s">&quot;__main__&quot;</span>:</div>
<div>    manager = FinanceManager()</div>
<div></div>
<div>    <span class="c2"># <i>初始化账户</i></span></div>
<div>    manager<span class="c">.</span>account<span class="c">.</span>accounts = {</div>
<div>        <span class="s">&quot;<i>支付宝</i>&quot;</span>: <span class="c">5000.0</span>,</div>
<div>        <span class="s">&quot;<i>现金</i>&quot;</span>: <span class="c">1000.0</span></div>
<div>    }</div>
<div></div>
<div>    <span class="c2"># <i>添加一笔</i></span></div>
<div>    bill = BillItem(</div>
<div>        date=datetime<span class="c">.</span>now(),</div>
<div>        amount=<span class="c">30.5</span>,</div>
<div>        content=<span class="s">&quot;<i>午餐</i>&quot;</span>,</div>
<div>        transaction_type=TransactionType<span class="c">.</span><span class="c">EXPENSE</span>,</div>
<div>        category=BillCategory<span class="c">.</span><span class="c">FOOD</span>,</div>
<div>        tags=[<span class="s">&quot;<i>日常</i>&quot;</span>, <span class="s">&quot;<i>餐饮</i>&quot;</span>],</div>
<div>        account=<span class="s">&quot;<i>现金</i>&quot;</span></div>
<div>    )</div>
<div>    manager<span class="c">.</span>add_bill(bill)</div>
<div></div>
<div>    <span class="c2"># <i>输出账户变化情况</i> <i>账户变化</i></span></div>
<div>    <span class="k">print</span>(<span class="s">&quot;\n=== <i>账户变化</i> ===&quot;</span>)</div>
<div>    <span class="k">print</span>(f<span class="s">&quot;<i>当前账户数量</i>: {len(manager.account.accounts)}&quot;</span>)</div>
<div>    <span class="k">print</span>(<span class="s">&quot;<i>账户详情</i>:&quot;</span>)</div>
<div>    <span class="k">for</span> name, balance <span class="k">in</span> manager<span class="c">.</span>account<span class="c">.</span>accounts<span class="c">.</span>items():</div>
<div>        change = balance - (<span class="c">5000.0</span> <span class="k">if</span> name == <span class="s">&quot;<i>支付宝</i>&quot;</span> <span class="k">else</span> <span class="c">1000.0</span>)</div>
<div>        <span class="k">print</span>(f<span class="s">&quot;{name}: {balance:.2f}<i>元</i> (<i>减少了</i> {abs(change):.2f}<i>元</i>)&quot;</span>)</div>
</div>
<!-- editor scrollbar / overview ruler -->
<div class="abs" style="left:1426px;top:92px;width:1px;height:583px;background:#e6e6e6"></div>
<div class="abs" style="left:1427px;top:128px;width:13px;height:2px;background:#444"></div>

<div id="panel">
  <div class="pt" style="left:20px">问题</div>
  <div class="pt" style="left:66px">输出</div>
  <div class="pt" style="left:112px">调试控制台</div>
  <div class="pt" style="left:191px;color:#333">终端</div>
  <div class="abs" style="left:189px;top:28px;width:26px;height:1px;background:#424242"></div>
  <div class="pt" style="left:237px">端口</div>
  <!-- actions -->
  <svg class="abs" style="left:926px;top:11.500px" width="13" height="13" viewBox="0 0 13 13" fill="none" stroke="#333" stroke-width="1.100"><path d="M6.500 0V13M0 6.500H13"/></svg>
  <svg class="abs" style="left:945px;top:15.500px" width="8" height="6" viewBox="0 0 8 6" fill="none" stroke="#555" stroke-width="1" stroke-linecap="round" stroke-linejoin="round"><path d="M1 1.500L4 4.500L7 1.500"/></svg>
  <svg class="abs" style="left:965px;top:15.500px" width="14" height="4" viewBox="0 0 14 4" fill="#3b3b3b"><circle cx="2" cy="2" r="1.100"/><circle cx="7" cy="2" r="1.100"/><circle cx="12" cy="2" r="1.100"/></svg>
  <svg class="abs" style="left:993px;top:13px" width="11" height="7" viewBox="0 0 11 7" fill="none" stroke="#444" stroke-width="1" stroke-linecap="round" stroke-linejoin="round"><path d="M1 6L5.500 1.500L10 6"/></svg>
  <svg class="abs" style="left:1019px;top:12px" width="10" height="10" viewBox="0 0 10 10" fill="none" stroke="#333" stroke-width="1.100"><path d="M.8.8L9.200 9.200M9.200.8L.8 9.200"/></svg>

  <!-- terminal -->
  <div class="tl" style="top:34px">/usr/local/bin/python3 /Users/hongfeilee/MarsCode/jizhang.py</div>
  <div class="abs" style="left:6.500px;top:50.500px;width:8px;height:8px;border-radius:4px;background:#0a7fd4"></div>
  <div class="tl" style="top:48px">hongfeilee@192 ~ % /usr/local/bin/python3 /Users/hongfeilee/MarsCode/jizhang.py</div>
  <div class="abs" style="left:6.500px;top:64.500px;width:8px;height:8px;border-radius:4px;background:#0a7fd4"></div>
  <div class="tl" style="top:62px">hongfeilee@192 ~ % /usr/local/bin/python3 /Users/hongfeilee/MarsCode/jizhang.py</div>
  <div class="tl" style="top:90px">=== <i>账</i><i>户</i><i>变</i><i>化</i> ===</div>
  <div class="tl" style="top:104px"><i>当</i><i>前</i><i>账</i><i>户</i><i>数</i><i>量</i>: 2</div>
  <div class="tl" style="top:118px"><i>账</i><i>户</i><i>详</i><i>情</i>:</div>
  <div class="tl" style="top:132px"><i>支</i><i>付</i><i>宝</i>: 4969.50<i>元</i><i>（</i><i>减</i><i>少</i><i>了</i> 30.50<i>元</i><i>）</i></div>
  <div class="tl" style="top:146px"><i>现</i><i>金</i>: 1000.00<i>元</i><i>（</i><i>减</i><i>少</i><i>了</i> 30.50<i>元</i><i>）</i></div>
  <div class="abs" style="left:6.500px;top:162.500px;width:8px;height:8px;border-radius:4px;border:1px solid #a0a0a0"></div>
  <div class="tl" style="top:160px">hongfeilee@192 ~ %</div>

  <!-- terminal scrollbar strip -->
  <div class="abs" style="left:868px;top:34px;width:15px;height:170px;border:1px solid #dcdcdc;border-bottom:0;background:#fff"></div>
  <div class="abs" style="left:869px;top:42px;width:4px;height:12px;background:#0a7fd4"></div>
  <div class="abs" style="left:869px;top:56px;width:4px;height:12px;background:#0a7fd4"></div>
  <div class="abs" style="left:870px;top:154px;width:3px;height:11px;background:#c2c2c2"></div>
  <!-- terminal tabs -->
  <div class="abs" style="left:883px;top:56px;width:164px;height:22px;background:#e4e4f1"></div>
  <svg class="abs" style="left:894px;top:38px" width="14" height="14" viewBox="0 0 14 14" fill="none" stroke="#3b3b3b" stroke-width="1.050" stroke-linecap="round" stroke-linejoin="round"><rect x=".6" y=".6" width="12.800" height="12.800" rx="1.500"/><path d="M3.500 4L6.500 7L3.500 10M7.500 10.200H10.500"/></svg>
  <div class="abs" style="left:913px;top:37px;font-size:13px;line-height:16px;color:#555">zsh</div>
  <svg class="abs" style="left:894px;top:60px" width="14" height="14" viewBox="0 0 14 14" fill="none" stroke="#3b3b3b" stroke-width="1.050" stroke-linecap="round" stroke-linejoin="round"><rect x=".6" y=".6" width="12.800" height="12.800" rx="1.500"/><path d="M3.500 4L6.500 7L3.500 10M7.500 10.200H10.500"/></svg>
  <div class="abs" style="left:913px;top:59px;font-size:13px;line-height:16px;color:#555">Python</div>
</div>

<!-- watermark -->
<div class="abs" id="wm" style="left:1160px;top:845px;font-size:24.500px;line-height:34px;color:#fff;white-space:nowrap;font-weight:500;-webkit-text-stroke:.3px #fff;text-shadow:1px 1px 1px #333,1.500px 1.500px 1px #666,0 0 1px #888;letter-spacing:.2px">掘金技术社区 @ <span style="letter-spacing:1.400px">leehft</span></div>

<div id="status">
  <div class="abs" style="left:0;top:0;width:34px;height:22px;background:#16825d"></div>
  <svg class="abs" style="left:12px;top:6px" width="10" height="10" viewBox="0 0 12 12" fill="none" stroke="#fff" stroke-width="1.300" stroke-linecap="round" stroke-linejoin="round"><path d="M1 3.500L5 7.500L1 11.500"/><path d="M11 .5L7 4.500L11 8.500"/></svg>
  <svg class="abs" style="left:42px;top:4px" width="14" height="14" viewBox="0 0 14 14" fill="none" stroke="#fff" stroke-width="1.050"><circle cx="7" cy="7" r="6.200"/><path d="M4.500 4.500L9.500 9.500M9.500 4.500L4.500 9.500"/></svg>
  <span style="left:60px">0</span>
  <svg class="abs" style="left:71px;top:4px" width="13" height="13" viewBox="0 0 13 13" fill="none" stroke="#fff" stroke-width="1.050" stroke-linejoin="round"><path d="M6.500 1L12.300 12H.7z"/><path d="M6.500 5V8.500M6.500 9.800V10.800"/></svg>
  <span style="left:88px">0</span>
  <svg class="abs" style="left:113px;top:4px" width="12" height="13" viewBox="0 0 12 13" fill="none" stroke="#fff" stroke-width="1" stroke-linecap="round" stroke-linejoin="round"><path d="M3 12.500L6 4.500L9 12.500M4.200 9.500H7.800"/><circle cx="6" cy="3.500" r=".9"/><path d="M3 1C1.800 2.300 1.800 4.700 3 6M9 1c1.200 1.300 1.200 3.700 0 5M1.200 0C-.2 2-.2 5 1.200 7M10.800 0c1.400 2 1.400 5 0 7"/></svg>
  <span style="left:129px">0</span>

  <svg class="abs" style="left:953px;top:6px" width="17" height="10" viewBox="0 0 17 10" fill="none" stroke="#fff" stroke-width="2.600" stroke-linecap="round" stroke-linejoin="round"><path d="M1.800 8L7.500 2"/><path d="M8 8L13.800 2V8"/></svg>
  <span style="left:972px;letter-spacing:.3px">MarsCode AI</span>
  <span style="left:1060px;letter-spacing:.3px">行 12，列 21</span>
  <span style="left:1149px;letter-spacing:.2px">空格: 4</span>
  <span style="left:1204px;letter-spacing:.3px">UTF-8</span>
  <span style="left:1256px">LF</span>
  <span style="left:1285px;top:-1px;font-size:11px;-webkit-text-stroke:0">{ }</span>
  <span style="left:1304px;letter-spacing:.3px">Python</span>
  <span style="left:1358px;letter-spacing:.5px">3.13.1</span>
  <svg class="abs" style="left:1412px;top:4px" width="12" height="14" viewBox="0 0 12 14" fill="none" stroke="#fff" stroke-width="1.050" stroke-linejoin="round"><path d="M6 1.200C3.600 1.200 2.300 3 2.300 5.200V8.500L1 10.500H11L9.700 8.500V5.200C9.700 3 8.400 1.200 6 1.200z"/><path d="M4.800 11.800a1.300 1.300 0 0 0 2.400 0"/></svg>
</div>
</body></html>
